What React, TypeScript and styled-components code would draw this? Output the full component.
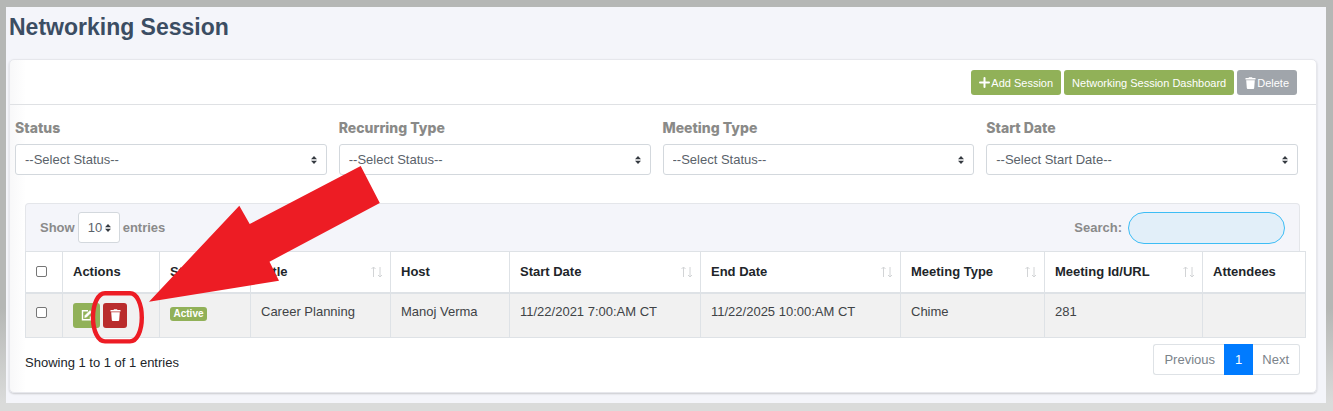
import React from "react";
import styled, { createGlobalStyle, css } from "styled-components";

const GlobalStyle = createGlobalStyle`
  *, *::before, *::after { box-sizing: border-box; }
  body {
    margin: 0;
    font-family: "Liberation Sans", Arial, sans-serif;
    font-size: 13px;
    line-height: 20px;
    color: #212529;
  }
  button, input, select { font: inherit; }
`;

const Frame = styled.div`
  position: relative;
  padding: 7px 7px 8px 6px;
  background: linear-gradient(#b5b7b5 0, #b5b7b5 75%, #dadbda 98%);
`;

const Page = styled.main`
  padding: 4px 9px 10px 3px;
  background: #f4f5fa;
`;

const PageTitle = styled.h1`
  margin: 0 0 16px;
  font-size: 23px;
  line-height: 32px;
  font-weight: 700;
  color: #3b4d63;
`;

const Card = styled.section`
  border: 1px solid #e6e7ec;
  border-radius: 5px;
  background: linear-gradient(90deg, #f8f8f9, #fff 16px);
  box-shadow: 0 1px 2px rgba(0, 0, 0, 0.18);
`;

const CardHeader = styled.header`
  display: flex;
  justify-content: flex-end;
  gap: 3px;
  padding: 10px 19px 9px 5px;
  border-bottom: 1px solid #dfe1e4;
`;

const Button = styled.button<{ $tone: "green" | "gray" | "red"; $width?: number }>`
  display: inline-flex;
  align-items: center;
  justify-content: center;
  gap: 1px;
  height: 25px;
  padding: 0 8px;
  border: 0;
  border-radius: 3px;
  font-size: 11px;
  color: #fff;
  background: ${({ $tone }) =>
    ({ green: "#91b158", gray: "#a0a5ab", red: "#b92c2c" })[$tone]};
  ${({ $width }) => $width && css`width: ${$width}px; padding: 0;`}
`;

const Filters = styled.div`
  display: grid;
  grid-template-columns: repeat(4, 1fr);
  gap: 12px;
  padding: 13px 18px 0 5px;
`;

const Field = styled.div`
  display: flex;
  flex-direction: column;
  gap: 6px;
`;

const FieldLabel = styled.label`
  font-family: Inter, "Liberation Sans", sans-serif;
  font-size: 14px;
  font-weight: 800;
  color: #8a8a88;
`;

const SelectBox = styled.span`
  position: relative;
  display: block;
  svg {
    position: absolute;
    right: 10px;
    top: 50%;
    transform: translateY(-50%);
    pointer-events: none;
  }
`;

const Select = styled.select<{ $compact?: boolean }>`
  appearance: none;
  display: block;
  width: ${({ $compact }) => ($compact ? "42px" : "100%")};
  height: 31px;
  padding: 0 10px 0 9px;
  border: 1px solid #d3d8dd;
  border-radius: 3px;
  background: #fff;
  color: #5a626a;
`;

const TableSection = styled.div`
  padding: 28px 12px 17px 15px;
`;

const TableBar = styled.div`
  display: flex;
  justify-content: space-between;
  align-items: center;
  margin-right: 4px;
  height: 48px;
  padding: 0 14px;
  border: 1px solid #e4e6ea;
  border-bottom: 0;
  border-radius: 4px 4px 0 0;
  background: #f4f5fa;
  font-weight: 700;
  color: #8a8a8a;
`;

const BarLabel = styled.label`
  display: flex;
  align-items: center;
  gap: 3px;
  select { font-weight: 400; }
  svg { right: 9px; }
`;

const SearchLabel = styled(BarLabel)`
  gap: 6px;
`;

const SearchInput = styled.input`
  width: 157px;
  height: 32px;
  padding: 0 14px;
  border: 1px solid #3dbdf5;
  border-radius: 16px;
  background: #e2eff9;
`;

const Table = styled.table`
  width: 100%;
  table-layout: fixed;
  border-collapse: collapse;
`;

const HeadCell = styled.th`
  height: 41px;
  padding: 0 7px 0 10px;
  border: 1px solid #dee2e6;
  border-bottom-width: 2px;
  background: #fff;
  text-align: left;
  white-space: nowrap;
`;

const HeadContent = styled.span`
  display: flex;
  align-items: center;
  justify-content: space-between;
`;

const Cell = styled.td`
  height: 45px;
  padding: 0 0 6px 10px;
  border: 1px solid #dee2e6;
  background: #f1f1f1;
  white-space: nowrap;
  color: #404346;
`;

const ActionCell = styled(Cell)`
  padding-bottom: 0;
`;

const Actions = styled.div`
  display: flex;
  gap: 3px;
`;

const Checkbox = styled.input`
  appearance: none;
  display: block;
  width: 11px;
  height: 11px;
  margin: 0;
  border: 1px solid #767676;
  border-radius: 2px;
  background: #fff;
`;

const Badge = styled.span`
  display: block;
  width: 37px;
  margin-top: 4px;
  border-radius: 3px;
  background: #91b158;
  color: #fff;
  font-size: 10px;
  line-height: 14px;
  font-weight: 700;
  text-align: center;
`;

const TableFooter = styled.footer`
  display: flex;
  justify-content: space-between;
  align-items: center;
  margin: 6px 4px 0 0;
`;

const Info = styled.span`
  padding-top: 6px;
`;

const Pagination = styled.nav`
  display: flex;
`;

const PageLink = styled.a<{ $active?: boolean }>`
  height: 31px;
  padding: 0 10px;
  border: 1px solid #dee2e6;
  line-height: 29px;
  text-decoration: none;
  color: #7b838a;
  &:first-child { border-right: 0; border-radius: 3px 0 0 3px; padding-right: 9px; }
  &:last-child { border-left: 0; border-radius: 0 3px 3px 0; padding-left: 9px; }
  ${({ $active }) =>
    $active && css`border-color: #007bff; background: #007bff; color: #fff;`}
`;

const Annotation = styled.svg`
  position: absolute;
  top: 0;
  left: 0;
  pointer-events: none;
`;

const Caret = () => (
  <svg width="6" height="8" viewBox="0 0 6 8" fill="#343a40" aria-hidden="true">
    <path d="M3 0 6 3.3H0zM3 8 0 4.7h6z" />
  </svg>
);

const SortIcon = () => (
  <svg width="12" height="12" viewBox="0 0 12 12" fill="none" stroke="#d2d4d6" aria-hidden="true">
    <path d="M2.5 11V1M.5 3l2-2 2 2M9 1v10M7 9l2 2 2-2" />
  </svg>
);

const TrashIcon = () => (
  <svg width="11" height="12" viewBox="0 0 11 12" fill="#fff" aria-hidden="true">
    <path d="M.5 1h3L4 .2h3L7.500 1h3v1.500H.5zM1.200 3.200h8.600L9.200 11a1 1 0 0 1-1 1H2.800a1 1 0 0 1-1-1z" />
  </svg>
);

const PlusIcon = () => (
  <svg width="11" height="11" viewBox="0 0 11 11" stroke="#fff" strokeWidth="2" strokeLinecap="round" aria-hidden="true">
    <path d="M5.500 1v9M1 5.500h9" />
  </svg>
);

const EditIcon = () => (
  <svg width="12" height="12" viewBox="0 0 12 12" fill="none" stroke="#fff" aria-hidden="true">
    <path d="M7 1.700H1.500v9h8V7.500" strokeWidth="1.400" />
    <path d="M4 6.500 9 1.500l1.600 1.600-5 5L3.700 8.500z" fill="#fff" strokeWidth=".5" />
  </svg>
);

const filters = [
  { id: "status", label: "Status", placeholder: "--Select Status--" },
  { id: "recurring", label: "Recurring Type", placeholder: "--Select Status--" },
  { id: "meeting", label: "Meeting Type", placeholder: "--Select Status--" },
  { id: "start", label: "Start Date", placeholder: "--Select Start Date--" },
];

const columns = [
  { label: "Actions", width: 97 },
  { label: "Status", width: 91, sortable: true },
  { label: "Title", width: 140, sortable: true },
  { label: "Host", width: 119 },
  { label: "Start Date", width: 191, sortable: true },
  { label: "End Date", width: 200, sortable: true },
  { label: "Meeting Type", width: 144, sortable: true },
  { label: "Meeting Id/URL", width: 158, sortable: true },
  { label: "Attendees", width: 103 },
];

export default function App() {
  return (
    <Frame>
      <GlobalStyle />
      <Page>
        <PageTitle>Networking Session</PageTitle>
        <Card>
          <CardHeader>
            <Button type="button" $tone="green"><PlusIcon />Add Session</Button>
            <Button type="button" $tone="green">Networking Session Dashboard</Button>
            <Button type="button" $tone="gray"><TrashIcon />Delete</Button>
          </CardHeader>
          <Filters>
            {filters.map((f) => (
              <Field key={f.id}>
                <FieldLabel htmlFor={f.id}>{f.label}</FieldLabel>
                <SelectBox>
                  <Select id={f.id}><option>{f.placeholder}</option></Select>
                  <Caret />
                </SelectBox>
              </Field>
            ))}
          </Filters>
          <TableSection>
            <TableBar>
              <BarLabel>
                Show
                <SelectBox>
                  <Select $compact><option>10</option></Select>
                  <Caret />
                </SelectBox>
                entries
              </BarLabel>
              <SearchLabel>
                Search:
                <SearchInput type="search" />
              </SearchLabel>
            </TableBar>
            <Table>
              <colgroup>
                <col width={37} />
                {columns.map((c) => <col key={c.label} width={c.width} />)}
              </colgroup>
              <thead>
                <tr>
                  <HeadCell><Checkbox type="checkbox" aria-label="Select all sessions" /></HeadCell>
                  {columns.map((c) => (
                    <HeadCell key={c.label} scope="col">
                      <HeadContent>{c.label}{c.sortable && <SortIcon />}</HeadContent>
                    </HeadCell>
                  ))}
                </tr>
              </thead>
              <tbody>
                <tr>
                  <Cell><Checkbox type="checkbox" aria-label="Select Career Planning" /></Cell>
                  <ActionCell>
                    <Actions>
                      <Button type="button" $tone="green" $width={27} aria-label="Edit"><EditIcon /></Button>
                      <Button type="button" $tone="red" $width={24} aria-label="Delete session"><TrashIcon /></Button>
                    </Actions>
                  </ActionCell>
                  <Cell><Badge>Active</Badge></Cell>
                  <Cell>Career Planning</Cell>
                  <Cell>Manoj Verma</Cell>
                  <Cell>11/22/2021 7:00:AM CT</Cell>
                  <Cell>11/22/2025 10:00:AM CT</Cell>
                  <Cell>Chime</Cell>
                  <Cell>281</Cell>
                  <Cell />
                </tr>
              </tbody>
            </Table>
            <TableFooter>
              <Info>Showing 1 to 1 of 1 entries</Info>
              <Pagination aria-label="Table pages">
                <PageLink href="#previous">Previous</PageLink>
                <PageLink href="#1" $active aria-current="page">1</PageLink>
                <PageLink href="#next">Next</PageLink>
              </Pagination>
            </TableFooter>
          </TableSection>
        </Card>
      </Page>
      <Annotation width="400" height="360" viewBox="0 0 400 360" aria-hidden="true">
        <path fill="#ed1c24" d="M149 301.700 239.300 205.700 249.700 224 360.700 166 379.800 203 269.500 261.700 279 280.700z" />
        <path
          fill="none"
          stroke="#ed1c24"
          strokeWidth="4.400"
          d="M105 293.300H130C137 293.300 141.800 304 141.800 317.500S137 341.400 130 341.400H105C98 341.400 93 331 93 317.500S98 293.300 105 293.300z"
        />
      </Annotation>
    </Frame>
  );
}
